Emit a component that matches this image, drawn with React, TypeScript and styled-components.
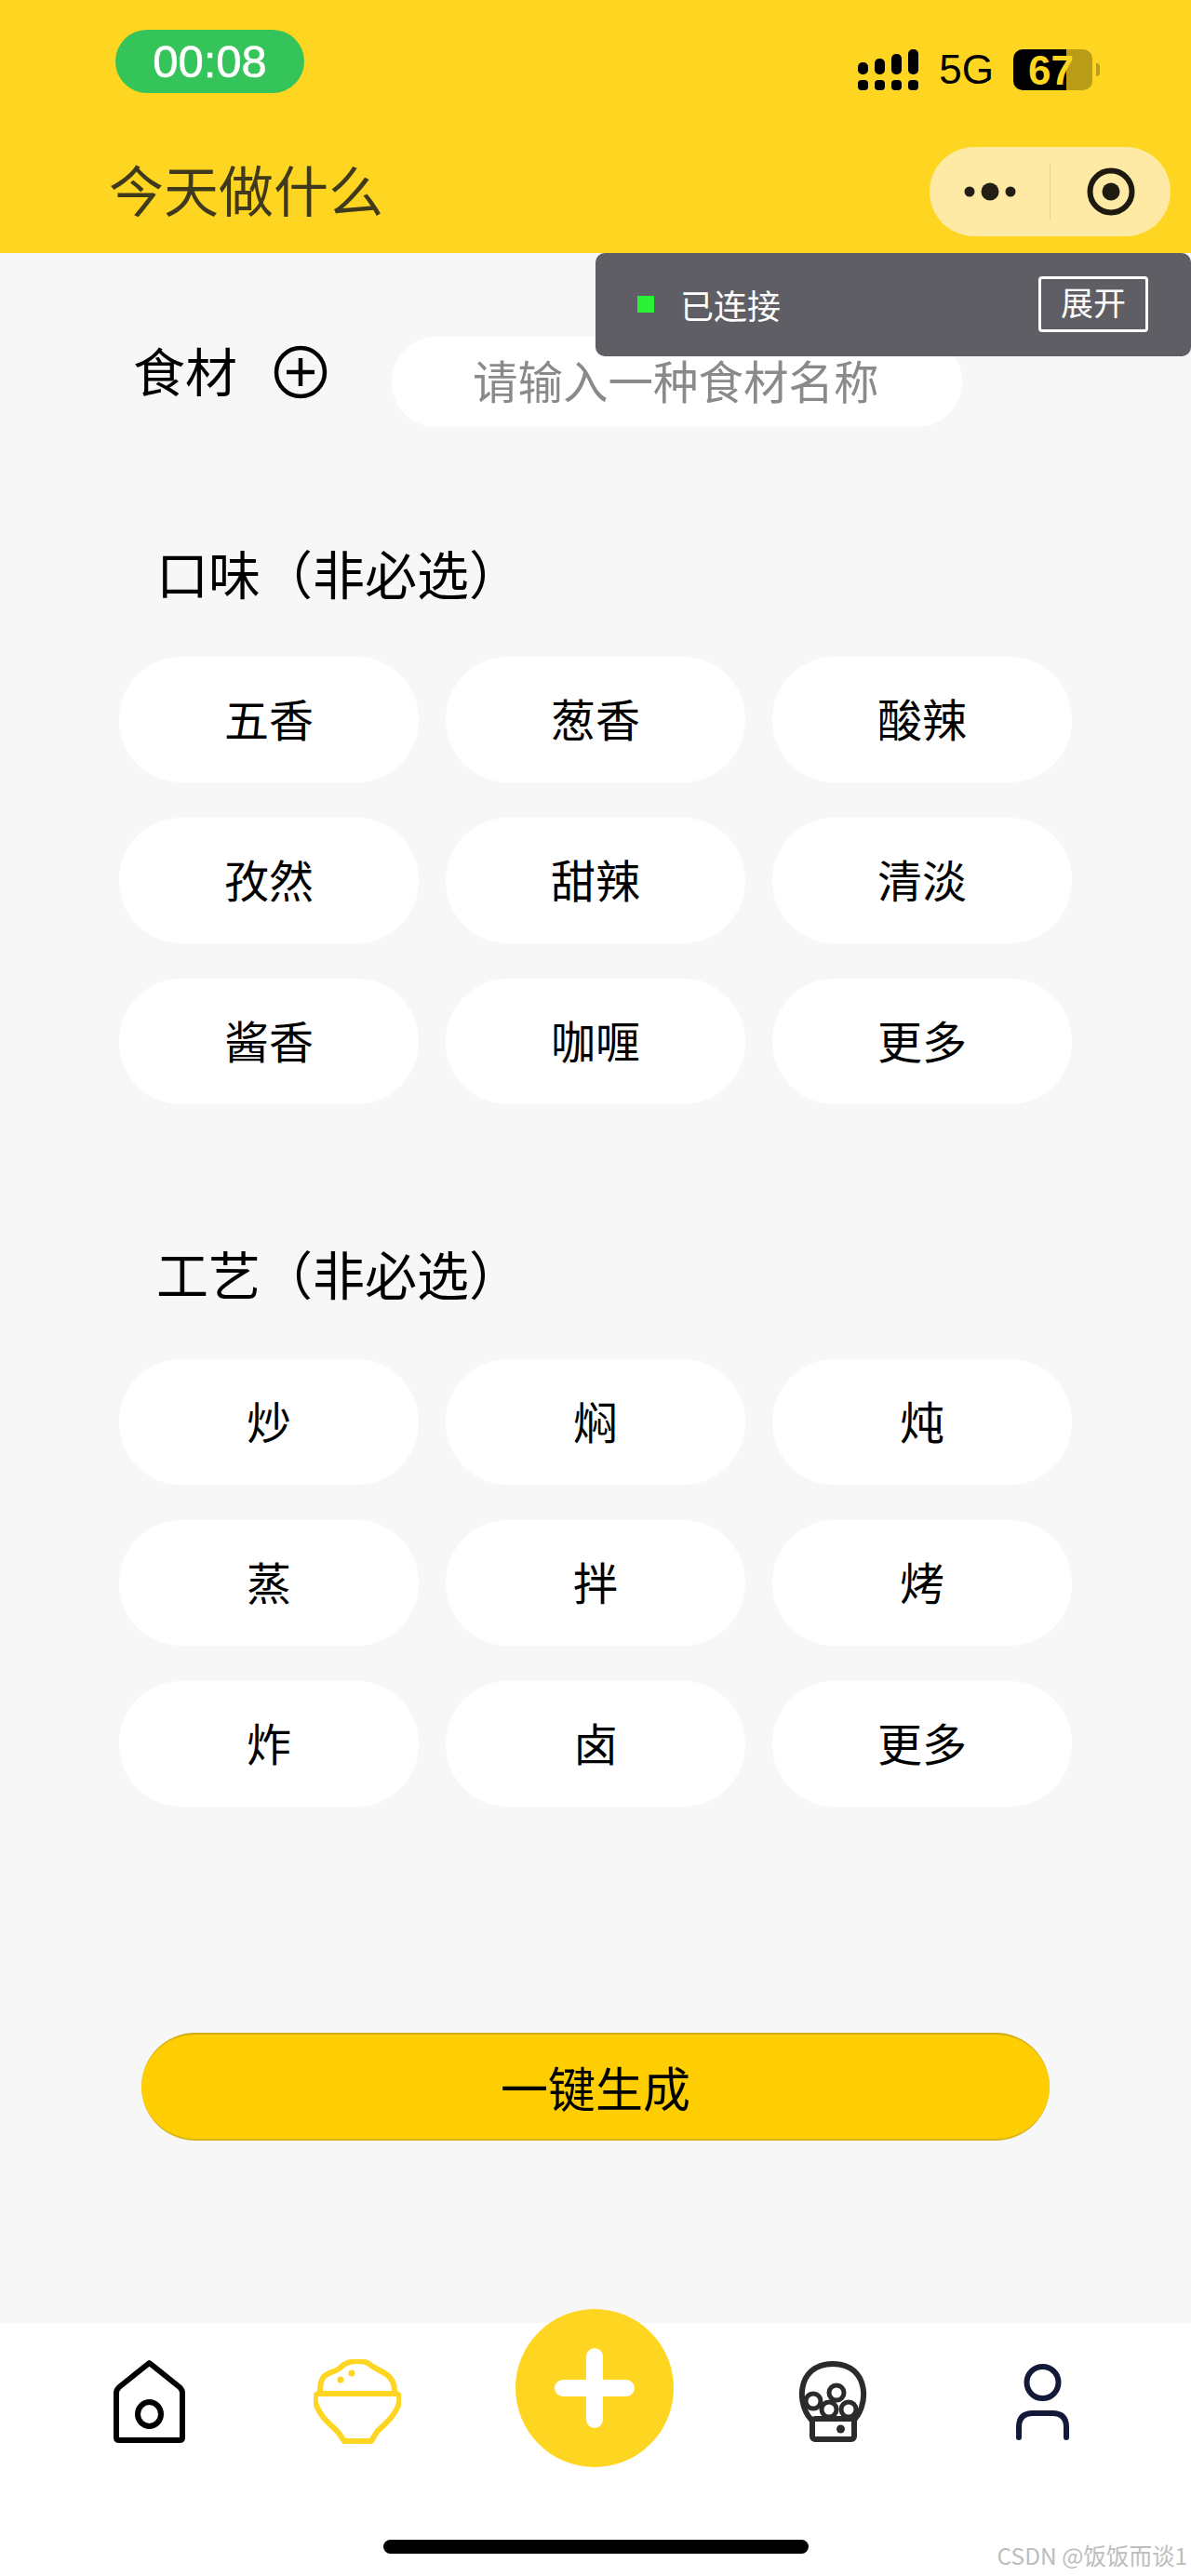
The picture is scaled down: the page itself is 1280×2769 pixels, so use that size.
import styled, { createGlobalStyle } from "styled-components";

const sans = `"Noto Sans CJK SC", "Liberation Sans", sans-serif`;
const latin = `"Liberation Sans", Arial, sans-serif`;
const yellow = "#fed521";

const GlobalStyle = createGlobalStyle`
    html, body {
        margin: 0;
        padding: 0;
        background: #fff;
    }
    * {
        box-sizing: border-box;
    }
`;

const Page = styled.div`
    position: relative;
    width: 1280px;
    height: 2769px;
    display: flex;
    flex-direction: column;
    overflow: hidden;
    font-family: ${sans};
    color: #000;
`;

const Header = styled.header`
    height: 272px;
    flex: none;
    background: ${yellow};
`;

const StatusRow = styled.div`
    display: flex;
    justify-content: space-between;
    align-items: flex-start;
    padding: 32px 98px 0 124px;
    height: 100px;
`;

const TimePill = styled.div`
    width: 203px;
    height: 68px;
    border-radius: 34px;
    background: #34c45a;
    color: #fff;
    font-family: ${latin};
    font-size: 49px;
    line-height: 68px;
    text-align: center;
    -webkit-text-stroke: 0.6px #fff;
`;

const StatusIcons = styled.div`
    display: flex;
    align-items: center;
    height: 44px;
    margin-top: 21px;
`;

const NetworkLabel = styled.span`
    margin-left: 22px;
    font-family: ${latin};
    font-size: 44px;
    line-height: 44px;
`;

const Battery = styled.div`
    width: 85px;
    height: 44px;
    margin-left: 21px;
    border-radius: 10px;
    background: linear-gradient(to right, #000 0 57px, #b99c17 57px);
    color: ${yellow};
    font-family: ${latin};
    font-size: 44px;
    font-weight: 700;
    line-height: 45px;
    padding-left: 16px;
    white-space: nowrap;
`;

const BatteryTip = styled.div`
    width: 4px;
    height: 14px;
    margin-left: 4px;
    border-radius: 0 7px 7px 0;
    background: #b99c17;
`;

const NavRow = styled.div`
    display: flex;
    justify-content: space-between;
    align-items: center;
    height: 96px;
    margin-top: 58px;
    padding: 0 22px 0 117px;
`;

const Title = styled.h1`
    margin: 0;
    padding-bottom: 6px;
    font-size: 59px;
    font-weight: 400;
    line-height: 96px;
    color: #3f3a1c;
`;

const Capsule = styled.div`
    width: 259px;
    height: 96px;
    border-radius: 48px;
    background: #feeaa5;
    display: grid;
    grid-template-columns: 1fr 1px 1fr;
    align-items: center;
    justify-items: center;
`;

const CapsuleDivider = styled.div`
    width: 1px;
    height: 60px;
    background: #e8d48c;
`;

const Notice = styled.div`
    position: absolute;
    top: 272px;
    left: 640px;
    width: 640px;
    height: 111px;
    border-radius: 10px;
    background: #5e5e64;
    display: flex;
    align-items: center;
    padding: 0 46px 2px 45px;
    color: #fff;
`;

const NoticeDot = styled.div`
    width: 18px;
    height: 18px;
    background: #2af135;
`;

const NoticeText = styled.span`
    margin-left: 28px;
    font-size: 36px;
    line-height: 48px;
    flex: 1;
`;

const NoticeButton = styled.div`
    width: 118px;
    height: 60px;
    border: 3px solid #fff;
    border-radius: 4px;
    font-size: 35px;
    line-height: 48px;
    text-align: center;
`;

const Main = styled.main`
    flex: 1;
    background: #f7f7f7;
    padding-top: 90px;
`;

const IngredientRow = styled.div`
    display: flex;
    align-items: center;
    padding-left: 143px;
`;

const IngredientLabel = styled.span`
    font-size: 56px;
    line-height: 66px;
    margin-bottom: 28px;
`;

const AddIcon = styled.svg`
    width: 58px;
    height: 58px;
    margin: 0 69px 22px 39px;
`;

const InputBox = styled.div`
    width: 613px;
    height: 97px;
    border-radius: 48px;
    background: #fff;
    padding-left: 87px;
    color: #8a8a8a;
    font-size: 48.5px;
    line-height: 93px;
    white-space: nowrap;
`;

const SectionLabel = styled.h2<{ $top: number }>`
    margin: ${(p) => p.$top}px 0 0 0;
    padding-left: 168px;
    font-size: 56px;
    font-weight: 400;
    line-height: 70px;
    white-space: nowrap;
`;

const ChipGrid = styled.div<{ $top: number }>`
    display: grid;
    grid-template-columns: repeat(3, 322px);
    grid-auto-rows: 135px;
    column-gap: 29px;
    row-gap: 38px;
    margin: ${(p) => p.$top}px 0 0 128px;
`;

const Chip = styled.div`
    border-radius: 67px;
    background: #fff;
    display: flex;
    align-items: center;
    justify-content: center;
    padding-bottom: 6px;
    font-size: 48px;
`;

const GenerateButton = styled.div`
    width: 976px;
    height: 116px;
    margin: 243px 0 0 152px;
    border-radius: 58px;
    border-top: 2px solid #d2ab10;
    border-bottom: 2px solid #d9b416;
    background: #fecd02;
    display: flex;
    align-items: center;
    justify-content: center;
    font-size: 51px;
`;

const TabBar = styled.nav`
    position: relative;
    height: 272px;
    flex: none;
    background: #fff;
    display: grid;
    grid-template-columns: 224px 224px 286px 226px 224px;
    align-items: start;
    justify-items: center;
    padding: 39px 0 0 48px;
`;

const PlusButton = styled.div`
    width: 170px;
    height: 170px;
    margin-top: -54px;
    border-radius: 50%;
    background: ${yellow};
    display: flex;
    align-items: center;
    justify-content: center;
`;

const HomeBar = styled.div`
    position: absolute;
    left: 412px;
    top: 233px;
    width: 457px;
    height: 15px;
    border-radius: 8px;
    background: #000;
`;

const Watermark = styled.span`
    position: absolute;
    right: 4px;
    top: 235px;
    color: #bdbdbd;
    font-size: 24.5px;
    line-height: 30px;
    white-space: nowrap;
`;

const flavours = ["五香", "葱香", "酸辣", "孜然", "甜辣", "清淡", "酱香", "咖喱", "更多"];
const crafts = ["炒", "焖", "炖", "蒸", "拌", "烤", "炸", "卤", "更多"];

function SignalIcon() {
    const columns = [
        { x: 0, top: 14 },
        { x: 18, top: 10 },
        { x: 36, top: 5 },
        { x: 54, top: 0 },
    ];
    return (
        <svg width="65" height="45" viewBox="0 0 65 45">
            {columns.map((c) => (
                <g key={c.x} fill="#000">
                    <rect x={c.x} y={c.top} width="11" height={27 - c.top} rx="5" />
                    <rect x={c.x} y="33" width="11" height="11" rx="4" />
                </g>
            ))}
        </svg>
    );
}

function MoreDots() {
    return (
        <svg width="56" height="24" viewBox="0 0 56 24" fill="#231f14">
            <circle cx="6" cy="12" r="5.5" />
            <circle cx="28" cy="12" r="9.5" />
            <circle cx="50" cy="12" r="5.5" />
        </svg>
    );
}

function TargetIcon() {
    return (
        <svg width="52" height="52" viewBox="0 0 52 52">
            <circle cx="26" cy="26" r="22.5" fill="none" stroke="#1e1a10" strokeWidth="6" />
            <circle cx="26" cy="26" r="9.5" fill="#1e1a10" />
        </svg>
    );
}

function HomeIcon() {
    return (
        <svg width="77" height="90" viewBox="0 -1 77 90" fill="none" stroke="#000" strokeWidth="6" strokeLinejoin="round">
            <path d="M38.5 3 L71 29 Q74 32 74 35 V83 Q74 86 71 86 H6 Q3 86 3 83 V35 Q3 32 6 29 Z" />
            <ellipse cx="38.5" cy="58" rx="12.5" ry="13" />
        </svg>
    );
}

function BowlIcon() {
    return (
        <svg width="94" height="91" viewBox="0 0 94 91" fill="none" stroke={yellow} strokeWidth="6" strokeLinejoin="round" strokeLinecap="round">
            <path d="M7 34 C7 24 10 18 15 16 C21 13 26 12 30 8 C37 1 54 0 61 6 C66 10 72 12 78 16 C84 20 87 26 87 34" />
            <path d="M6 37 H88 C92 37 93 41 92 46 C89 60 76 70 68 78 L62 88 H33 L26 78 C18 70 5 60 2 46 C1 41 2 37 6 37 Z" />
            <circle cx="29" cy="22" r="2.5" fill={yellow} strokeWidth="2" />
            <circle cx="41" cy="15" r="2.5" fill={yellow} strokeWidth="2" />
        </svg>
    );
}

function PlusIcon() {
    return (
        <svg width="86" height="86" viewBox="0 0 86 86" fill="#fff">
            <rect x="0" y="34" width="86" height="18" rx="9" />
            <rect x="34" y="0" width="18" height="86" rx="9" />
        </svg>
    );
}

function CandyIcon() {
    const balls = [
        { x: 17, y: 43 },
        { x: 42, y: 34 },
        { x: 34, y: 52 },
        { x: 55, y: 52 },
    ];
    return (
        <svg width="76" height="89" viewBox="0 -2 76 89" fill="none" stroke="#2b2b2b" strokeWidth="6">
            <path d="M18 66 C-2 50 -2 3 38 3 C78 3 78 50 58 66" />
            {balls.map((b) => (
                <circle key={b.x} cx={b.x} cy={b.y} r="8" fill="#fff" strokeWidth="5" />
            ))}
            <rect x="16" y="62" width="45" height="22" rx="3" fill="#fff" />
            <circle cx="46.5" cy="73" r="4.5" fill="#2b2b2b" stroke="none" />
        </svg>
    );
}

function PersonIcon() {
    return (
        <svg width="57" height="87" viewBox="0 -5 57 87" fill="none" stroke="#14193a" strokeWidth="6" strokeLinecap="round">
            <circle cx="28.5" cy="20" r="17" />
            <path d="M3 79 V68 Q3 53 18 53 H39 Q54 53 54 68 V79" />
        </svg>
    );
}

function App() {
    return (
        <Page>
            <GlobalStyle />
            <Header>
                <StatusRow>
                    <TimePill>00:08</TimePill>
                    <StatusIcons>
                        <SignalIcon />
                        <NetworkLabel>5G</NetworkLabel>
                        <Battery>67</Battery>
                        <BatteryTip />
                    </StatusIcons>
                </StatusRow>
                <NavRow>
                    <Title>今天做什么</Title>
                    <Capsule>
                        <MoreDots />
                        <CapsuleDivider />
                        <TargetIcon />
                    </Capsule>
                </NavRow>
            </Header>
            <Notice>
                <NoticeDot />
                <NoticeText>已连接</NoticeText>
                <NoticeButton>展开</NoticeButton>
            </Notice>
            <Main>
                <IngredientRow>
                    <IngredientLabel>食材</IngredientLabel>
                    <AddIcon viewBox="0 0 58 58" fill="none" stroke="#000" strokeWidth="4.5">
                        <circle cx="29" cy="29" r="26" />
                        <path d="M14 29 H44 M29 14 V44" />
                    </AddIcon>
                    <InputBox>请输入一种食材名称</InputBox>
                </IngredientRow>
                <SectionLabel $top={121}>口味（非必选）</SectionLabel>
                <ChipGrid $top={56}>
                    {flavours.map((name) => (
                        <Chip key={name}>{name}</Chip>
                    ))}
                </ChipGrid>
                <SectionLabel $top={146}>工艺（非必选）</SectionLabel>
                <ChipGrid $top={58}>
                    {crafts.map((name) => (
                        <Chip key={name}>{name}</Chip>
                    ))}
                </ChipGrid>
                <GenerateButton>一键生成</GenerateButton>
            </Main>
            <TabBar>
                <HomeIcon />
                <BowlIcon />
                <PlusButton>
                    <PlusIcon />
                </PlusButton>
                <CandyIcon />
                <PersonIcon />
                <HomeBar />
                <Watermark>CSDN @饭饭而谈1</Watermark>
            </TabBar>
        </Page>
    );
}

export default App;
